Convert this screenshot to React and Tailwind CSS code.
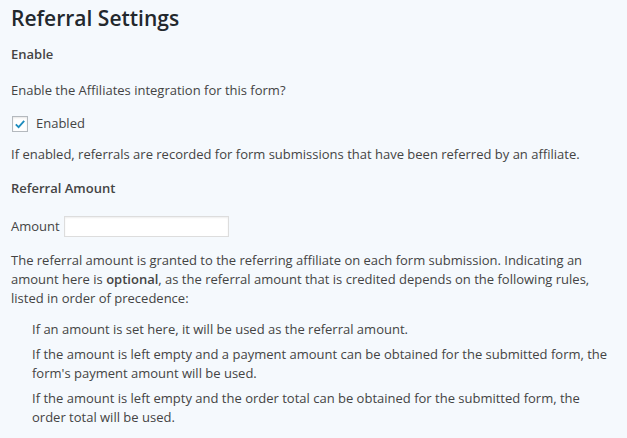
import React from 'react';

const App = () => {
  return (
    <div className="min-h-screen w-[627px] bg-[#f5f9fd] text-[#444] font-['Open_Sans',sans-serif] text-[13px] leading-[19px]">
      <div className="pl-[11px] pr-[13px] pt-[4px]">
        {/* 标题 */}
        <h3 className="text-[21px] leading-[28px] font-semibold text-[#23282d]">Referral Settings</h3>

        <h4 className="mt-[13px] font-semibold">Enable</h4>
        <p className="mt-[17px]">Enable the Affiliates integration for this form?</p>

        <label className="mt-[14px] flex items-center gap-[8px]">
          <span className="ml-[1px] w-[16px] h-[16px] bg-white border border-[#b4b9be] flex items-center justify-center shadow-[inset_0_1px_2px_rgba(0,0,0,0.1)]">
            <svg viewBox="0 0 20 20" className="w-[14px] h-[14px]">
              <path d="M4 10.5 L8 14.5 L16 5.5" fill="none" stroke="#1e8cbe" strokeWidth="2.6" />
            </svg>
          </span>
          <span>Enabled</span>
        </label>

        <p className="mt-[12px]">If enabled, referrals are recorded for form submissions that have been referred by an affiliate.</p>

        <h4 className="mt-[15px] font-semibold">Referral Amount</h4>

        <div className="mt-[18px] flex items-center gap-[4px]">
          <span>Amount</span>
          <input type="text" className="w-[165px] h-[21px] bg-white border border-[#ddd] shadow-[inset_0_1px_2px_rgba(0,0,0,0.07)] outline-none" />
        </div>

        <p className="mt-[14px]">
          The referral amount is granted to the referring affiliate on each form submission. Indicating an amount here is <strong className="font-semibold">optional</strong>, as the referral amount that is credited depends on the following rules, listed in order of precedence:
        </p>

        <ul className="mt-[12px] pl-[21px] flex flex-col gap-[6px]">
          <li>If an amount is set here, it will be used as the referral amount.</li>
          <li>If the amount is left empty and a payment amount can be obtained for the submitted form, the form's payment amount will be used.</li>
          <li>If the amount is left empty and the order total can be obtained for the submitted form, the order total will be used.</li>
        </ul>
      </div>
    </div>
  );
};

export default App;
